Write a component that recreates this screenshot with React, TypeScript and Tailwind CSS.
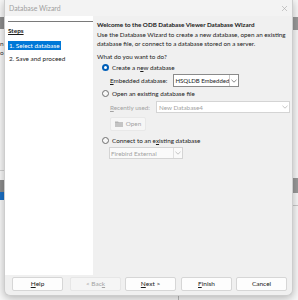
import React from "react";

const FONT = "font-['Lato','Noto_Sans',sans-serif]";

function Chevron({ color = "#6b6b6b" }: { color?: string }) {
  return (
    <svg width="6" height="4" viewBox="0 0 6 4" fill="none">
      <path d="M0.5 0.8 L3 3.2 L5.5 0.8" stroke={color} strokeWidth="0.8" />
    </svg>
  );
}

function Radio({ checked }: { checked?: boolean }) {
  return checked ? (
    <span className="shrink-0 flex items-center justify-center w-[7px] h-[7px] rounded-full bg-[#005fb8]">
      <span className="w-[3px] h-[3px] rounded-full bg-white" />
    </span>
  ) : (
    <span className="shrink-0 w-[7px] h-[7px] rounded-full border border-[#6e6e6e] bg-[#f7f7f7]" />
  );
}

function Button({ children, disabled, className = "" }: { children: React.ReactNode; disabled?: boolean; className?: string }) {
  return (
    <div
      className={`h-[14px] w-[51px] shrink-0 flex items-center justify-center rounded-[2px] border text-[6.5px] whitespace-nowrap ${
        disabled ? "bg-[#f5f5f5] border-[#e6e6e6] text-[#a3a3a3]" : "bg-[#fdfdfd] border-[#d6d6d6] text-[#1b1b1b]"
      } ${className}`}
    >
      {children}
    </div>
  );
}

export default function App() {
  return (
    <div className={`relative w-[298px] h-[300px] overflow-hidden bg-[#f7f7f7] ${FONT}`}>
      {/* ── window behind the dialog ── */}
      <div className="absolute left-0 top-[17px] w-[4px] h-[12px] bg-[#8d8d8d]" />
      <div className="absolute left-0 top-[39px] text-[6.5px] leading-[9px] text-[#333]">
        <div>n</div>
        <div>o</div>
      </div>
      <div className="absolute left-0 top-[170px] w-[4px] h-px bg-[#d0d0d0]" />
      <div className="absolute left-0 top-[180px] w-[4px] h-[12px] bg-[#8d8d8d]" />
      <div className="absolute left-0 top-[192px] w-[4px] h-[8px] bg-[#1a6fc4]" />
      <div className="absolute right-0 top-[17px] w-[5px] h-[13px] bg-[#9a9a9a]" />
      <div className="absolute right-0 top-[178px] w-[5px] h-[15px] bg-[#9a9a9a]" />
      <div className="absolute right-0 top-[205px] w-[5px] h-px bg-[#c8c8c8]" />
      <div className="absolute left-[178px] top-[290px] w-px h-[10px] bg-[#b8b8b8]" />

      {/* ── dialog ── */}
      <div className="absolute left-[4px] top-0 w-[289px] h-[296px] flex flex-col bg-[#f0f0f0] border border-t-0 border-[#cdcdcd] rounded-b-[6px] shadow-[0_2px_8px_rgba(0,0,0,0.28)]">
        {/* title bar */}
        <div className="h-[16px] flex items-center justify-between pl-[4px] pr-[5px] bg-[#f3f3f3]">
          <span className="text-[6.9px] text-[#a0a0a0]">Database Wizard</span>
          <svg width="5" height="5" viewBox="0 0 5 5">
            <path d="M0 0 L5 5 M5 0 L0 5" stroke="#a8a8a8" strokeWidth="0.6" />
          </svg>
        </div>

        {/* body */}
        <div className="flex-1 flex">
          {/* steps */}
          <div className="w-[88px] shrink-0 bg-white flex flex-col pl-[3px] whitespace-nowrap text-[6.4px] leading-[9px]">
            <div className="mt-[5px] h-px bg-[#7a7a7a]" />
            <div className="mt-[4px] font-bold text-[#1b1b1b] underline">Steps</div>
            <div className="mt-[6px] self-start bg-[#0078d7] text-white px-[1px]">1. Select database</div>
            <div className="mt-[4px] text-[#1b1b1b] px-[1px]">2. Save and proceed</div>
          </div>

          {/* content */}
          <div className="flex-1 min-w-0 flex flex-col pl-[4px] text-[6.3px] leading-[9px] text-[#1b1b1b] whitespace-nowrap">
            <div className="mt-[3.5px] font-bold text-[6.25px]">Welcome to the ODB Database Viewer Database Wizard</div>
            <div className="mt-[1px]">Use the Database Wizard to create a new database, open an existing</div>
            <div>database file, or connect to a database stored on a server.</div>
            <div className="mt-[4px]">What do you want to do?</div>

            <div className="mt-[2px] flex items-center gap-[3px] pl-[5px]">
              <Radio checked />
              <span>Create a n<u>e</u>w database</span>
            </div>
            <div className="mt-[2.5px] flex items-center pl-[13px]">
              <span className="w-[63px] shrink-0"><u>E</u>mbedded database:</span>
              <div className="h-[13px] w-[66px] shrink-0 flex items-center bg-white border border-[#8a8a8a]">
                <span className="flex-1 pl-[1.5px] text-[6px]">HSQLDB Embedded</span>
                <span className="h-full w-[9px] flex items-center justify-center border-l border-[#c8c8c8]">
                  <Chevron />
                </span>
              </div>
            </div>

            <div className="mt-[1.5px] flex items-center gap-[3px] pl-[5px]">
              <Radio />
              <span>Open an existing database f<u>i</u>le</span>
            </div>
            <div className="mt-[3.5px] flex items-center pl-[13px] text-[#a3a3a3]">
              <span className="w-[46px] shrink-0"><u>R</u>ecently used:</span>
              <div className="h-[12px] w-[134px] shrink-0 flex items-center bg-white border border-[#d4d4d4]">
                <span className="flex-1 pl-[2px]">New Database4</span>
                <span className="w-[9px] flex items-center justify-center">
                  <Chevron color="#b5b5b5" />
                </span>
              </div>
            </div>
            <div className="mt-[4px] ml-[13px] w-[36px] h-[13.5px] flex items-center justify-center gap-[3px] bg-[#f6f6f6] border border-[#e8e8e8] rounded-[2px] text-[#a3a3a3]">
              <svg width="8" height="6" viewBox="0 0 8 6">
                <path d="M0 0.5 H3 L3.8 1.3 H8 V6 H0 Z" fill="#b4b4b4" />
                <path d="M0 2 H8 V6 H0 Z" fill="#c4c4c4" />
              </svg>
              <span>Open</span>
            </div>

            <div className="mt-[5px] flex items-center gap-[3px] pl-[5px]">
              <Radio />
              <span>Connect to an e<u>x</u>isting database</span>
            </div>
            <div className="mt-[2.5px] ml-[12px] w-[74px] h-[12px] flex items-center bg-[#fafafa] border border-[#d4d4d4] text-[#a3a3a3]">
              <span className="flex-1 pl-[1px]">Firebird External</span>
              <span className="w-[9px] flex items-center justify-center border-l border-[#e0e0e0] h-full">
                <Chevron color="#b5b5b5" />
              </span>
            </div>
          </div>
        </div>

        {/* footer */}
        <div className="h-[20px] flex items-start pt-[2px] pl-[7px]">
          <Button><u>H</u>elp</Button>
          <Button disabled className="ml-[7px]">&lt; Bac<u>k</u></Button>
          <Button className="ml-[4px]"><u>N</u>ext &gt;</Button>
          <Button className="ml-[5px]"><u>F</u>inish</Button>
          <Button className="ml-[4px]">Cancel</Button>
        </div>
      </div>
    </div>
  );
}
